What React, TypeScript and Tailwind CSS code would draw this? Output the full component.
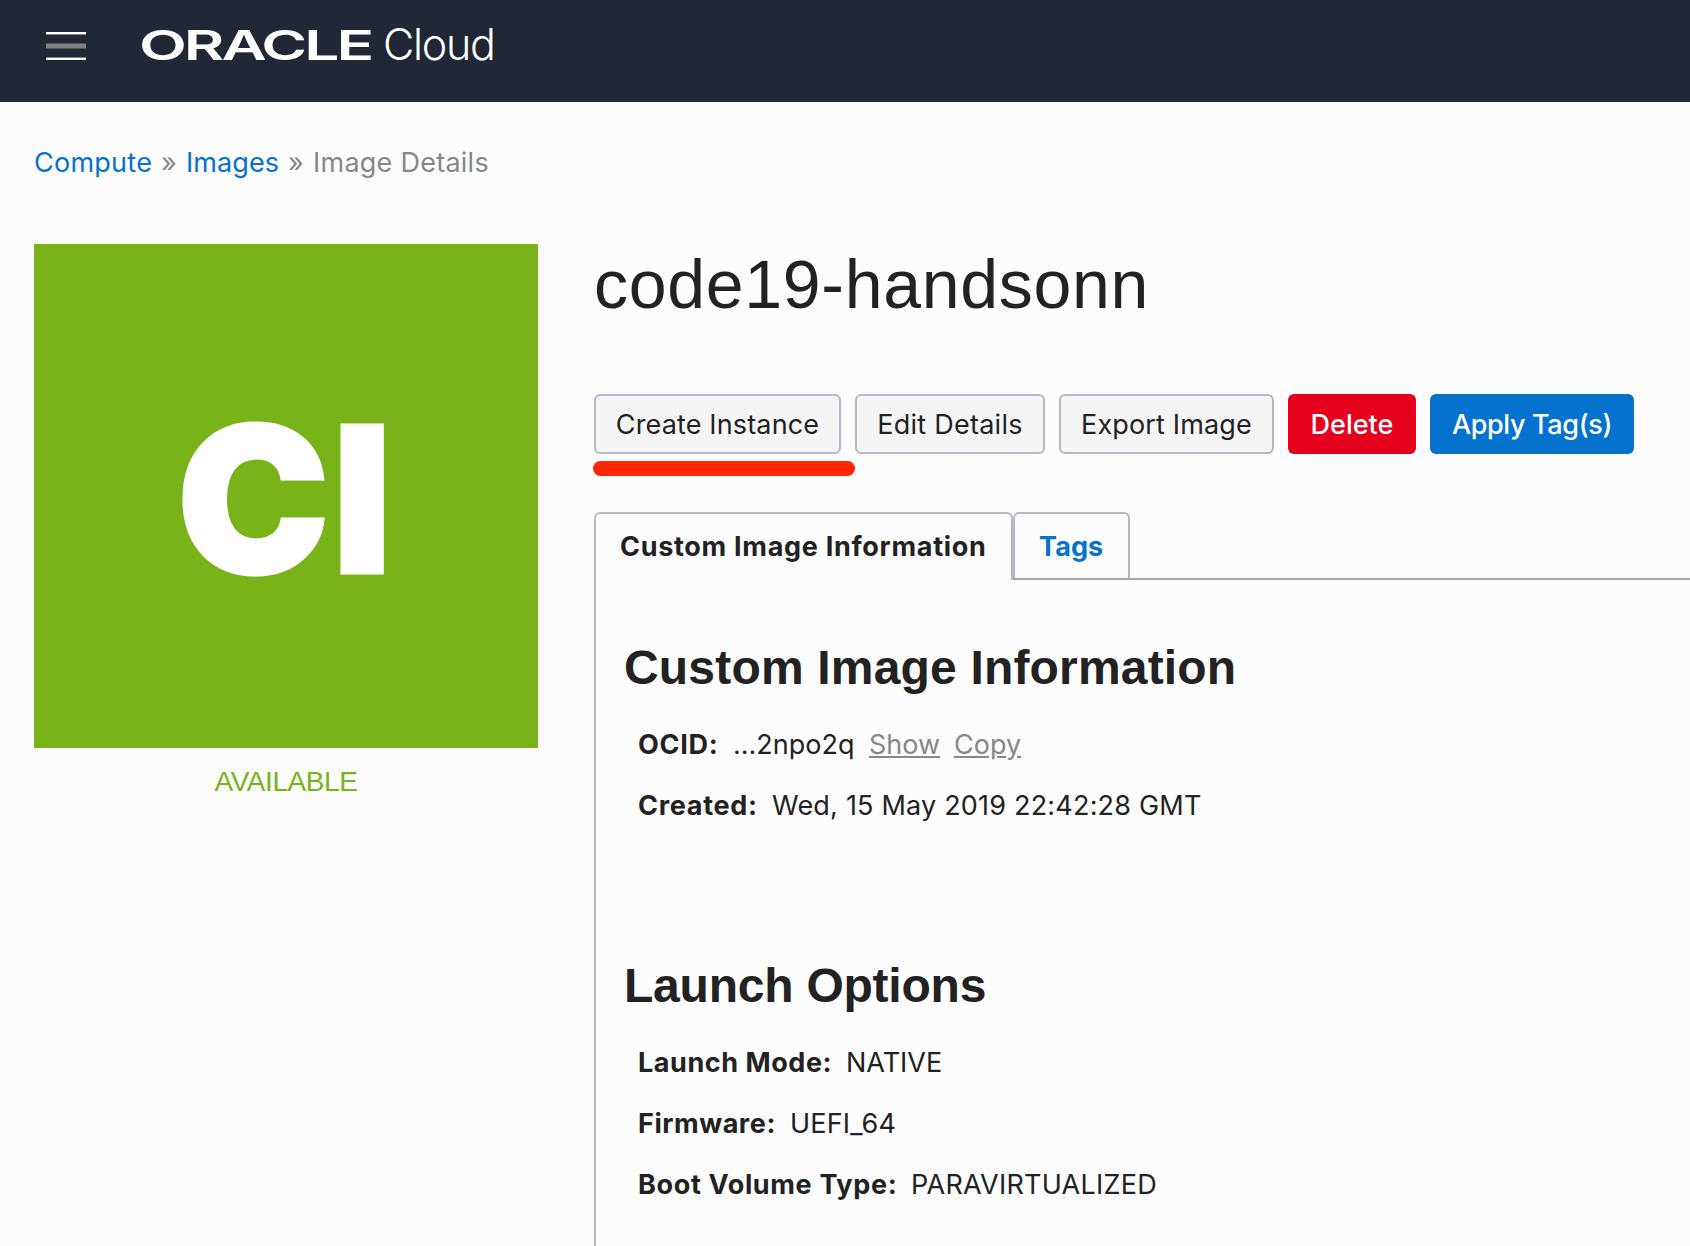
import React from "react";

const body = "text-[27px] leading-[32px]";

function Wordmark() {
  return (
    <div className="flex h-[58px] items-center text-white">
      <div className="h-[40px] w-[244px]">
        <span className="inline-block origin-left scale-x-[1.52] font-['Inter',sans-serif] text-[41px] leading-[42px] font-semibold tracking-[-2px]">
          ORACLE
        </span>
      </div>
      <span className="font-['Inter',sans-serif] text-[43px] leading-[40px] font-light tracking-[-1.3px]">Cloud</span>
    </div>
  );
}

function Button({ className, text, label }: { className: string; text: string; label: string }) {
  return (
    <button className={`flex h-[60px] items-center justify-center rounded-[6px] whitespace-nowrap ${className}`}>
      <span className={`pt-[2px] ${body} ${text}`}>{label}</span>
    </button>
  );
}

const plain = "border-2 border-[#b3bac5] bg-[#f5f5f5] text-[#222]";

function Row({ label, width, track, children }: { label: string; width: string; track: string; children: React.ReactNode }) {
  return (
    <div className={`flex h-[61px] items-center whitespace-nowrap ${body}`}>
      <div className={width}>
        <span className={`font-bold ${track}`}>{label}</span>
      </div>
      {children}
    </div>
  );
}

export default function App() {
  return (
    <div className="h-[1246px] w-[1690px] overflow-hidden bg-[#fcfcfc] font-['Inter',sans-serif] text-[#222]">
      <header className="flex h-[102px] items-start bg-[#202735] pt-[15px] pl-[46px]">
        <div className="mt-[17px] flex w-[93px] flex-col">
          <div className="h-[3px] w-[40px] border-b border-[#808080] bg-white" />
          <div className="mt-[8px] h-[6px] w-[40px] border-y border-[#4c525c] bg-[#808080]" />
          <div className="mt-[8px] h-[3px] w-[40px] border-t border-[#808080] bg-white" />
        </div>
        <Wordmark />
      </header>

      <nav className={`flex h-[142px] items-start pt-[45px] pl-[34px] tracking-[0.25px] text-[#878787] whitespace-nowrap ${body}`}>
        <a className="w-[127px] text-[#0572ce]">Compute</a>
        <span className="w-[25px]">»</span>
        <a className="w-[102px] tracking-[0.1px] text-[#0572ce]">Images</a>
        <span className="w-[25px]">»</span>
        <span>Image Details</span>
      </nav>

      <div className="flex pl-[34px]">
        <aside className="w-[560px]">
          <div className="flex h-[504px] w-[504px] items-center justify-center bg-[#78b319] pt-[6px] text-white">
            <span className="text-[204px] leading-[206px] font-black tracking-[3px] [-webkit-text-stroke:3px_white]">CI</span>
          </div>
          <div className="mt-[18px] w-[504px] text-center font-['Liberation_Sans',sans-serif] text-[28px] leading-[32px] tracking-[-0.42px] text-[#78b319]">
            AVAILABLE
          </div>
        </aside>

        <main className="w-[1096px]">
          <h1 className="h-[150px] font-['Liberation_Sans',sans-serif] text-[68px] leading-[80px] tracking-[0.7px]">code19-handsonn</h1>
          <div className="relative flex gap-[14px]">
            <Button className={`w-[247px] ${plain}`} text="tracking-[0.15px]" label="Create Instance" />
            <Button className={`w-[190px] ${plain}`} text="tracking-[0.25px]" label="Edit Details" />
            <Button className={`w-[215px] ${plain}`} text="tracking-[0.15px]" label="Export Image" />
            <Button className="w-[128px] bg-[#e5001e] text-white" text="font-medium" label="Delete" />
            <Button className="w-[204px] bg-[#0572ce] text-white" text="font-medium tracking-[-0.35px]" label="Apply Tag(s)" />
            <div className="absolute top-[67px] left-[-1px] h-[15px] w-[262px] rounded-full bg-[#ff2600]" />
          </div>

          <div className="mt-[58px] flex h-[68px] font-bold">
            <div className={`flex w-[419px] items-start rounded-t-[6px] border-2 border-b-0 border-[#b3bac5] pt-[17px] pl-[24px] tracking-[0.7px] whitespace-nowrap ${body}`}>
              Custom Image Information
            </div>
            <div className="flex flex-1 border-b-2 border-[#a6a6a8]">
              <div className={`w-[117px] rounded-t-[6px] border-2 border-b-0 border-[#b3bac5] pt-[17px] pl-[24px] tracking-[0.1px] text-[#0572ce] ${body}`}>
                Tags
              </div>
            </div>
          </div>

          <div className="h-[666px] border-l-2 border-[#b3bac5] pl-[28px]">
            <h2 className="pt-[58px] font-['Liberation_Sans',sans-serif] text-[48px] leading-[60px] font-bold tracking-[0.18px]">
              Custom Image Information
            </h2>
            <div className="mt-[16px] pl-[14px]">
              <Row label="OCID:" width="w-[95px]" track="tracking-[0.7px]">
                <span className="w-[136px]">...2npo2q</span>
                <a className="w-[85px] text-[#878787] underline">Show</a>
                <a className="text-[#878787] underline">Copy</a>
              </Row>
              <Row label="Created:" width="w-[134px]" track="tracking-[0.7px]">
                <span className="tracking-[0.2px]">Wed, 15 May 2019 22:42:28 GMT</span>
              </Row>
            </div>
            <h2 className="mt-[120px] font-['Liberation_Sans',sans-serif] text-[48px] leading-[60px] font-bold tracking-[-0.23px]">
              Launch Options
            </h2>
            <div className="mt-[16px] pl-[14px]">
              <Row label="Launch Mode:" width="w-[208px]" track="tracking-[0.55px]">
                <span>NATIVE</span>
              </Row>
              <Row label="Firmware:" width="w-[152px]" track="tracking-[0.55px]">
                <span className="tracking-[0.2px]">UEFI_64</span>
              </Row>
              <Row label="Boot Volume Type:" width="w-[273px]" track="tracking-[0.65px]">
                <span className="tracking-[0.25px]">PARAVIRTUALIZED</span>
              </Row>
            </div>
          </div>
        </main>
      </div>
    </div>
  );
}
